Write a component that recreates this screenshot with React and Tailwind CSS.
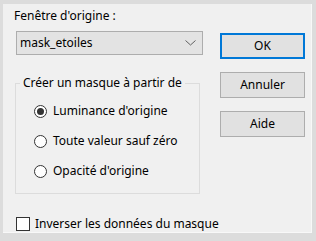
import React from "react";

function Radio({ checked, label }) {
  return (
    <div className="flex h-[30px] items-center">
      <span className="flex h-[13px] w-[13px] items-center justify-center rounded-full border border-[#333333] bg-white">
        {checked && <span className="h-[7px] w-[7px] rounded-full bg-[#333333]" />}
      </span>
      <span className="ml-[6px] leading-[16px]">{label}</span>
    </div>
  );
}

function Button({ children, primary, className = "" }) {
  return (
    <div
      className={
        "flex h-[26px] w-[85px] items-center justify-center bg-[#e1e1e1] leading-[16px] " +
        (primary ? "border-2 border-[#0078d7] " : "border border-[#adadad] ") +
        className
      }
    >
      {children}
    </div>
  );
}

export default function App() {
  return (
    <div className="h-[241px] w-[316px] bg-[#dcdcdc] pl-[3px] pr-[4px] pt-[4px] pb-[8px] font-['Noto_Sans',sans-serif] text-[12px] text-black">
      <div className="flex h-full border-b border-r border-[#f8f8f8] bg-[#f0f0f0]">
        <div className="ml-[12px] flex w-[188px] flex-col">
          <div className="mt-[4px] ml-[-1px] leading-[16px]">Fenêtre d'origine :</div>
          <div className="mt-[7px] ml-[1px] flex h-[24px] w-[187px] items-center justify-between border border-[#adadad] bg-[#e3e3e3] pl-[3px] pr-[6px] leading-[16px]">
            <span>mask_etoiles</span>
            <svg width="11" height="6" viewBox="0 0 11 6" fill="none">
              <path d="M0.5 0.5 L5.5 5 L10.5 0.5" stroke="#606060" strokeWidth="1" />
            </svg>
          </div>
          <fieldset className="mt-[20px] h-[119px] w-[185px] border border-[#dcdcdc] pb-[7px]">
            <legend className="ml-[4px] whitespace-nowrap px-[3px] leading-[16px]">Créer un masque à partir de</legend>
            <div className="mt-[5px] flex flex-col pl-[18px]">
              <Radio checked label="Luminance d'origine" />
              <Radio label="Toute valeur sauf zéro" />
              <Radio label="Opacité d'origine" />
            </div>
          </fieldset>
          <div className="mt-[22px] ml-[1px] flex items-center">
            <span className="h-[14px] w-[14px] shrink-0 border border-[#333333] bg-white" />
            <span className="ml-[5px] whitespace-nowrap leading-[16px]">Inverser les données du masque</span>
          </div>
        </div>
        <div className="ml-[17px] flex flex-col pt-[29px]">
          <Button primary>OK</Button>
          <Button className="mt-[13px]">Annuler</Button>
          <Button className="mt-[13px]">Aide</Button>
        </div>
      </div>
    </div>
  );
}
